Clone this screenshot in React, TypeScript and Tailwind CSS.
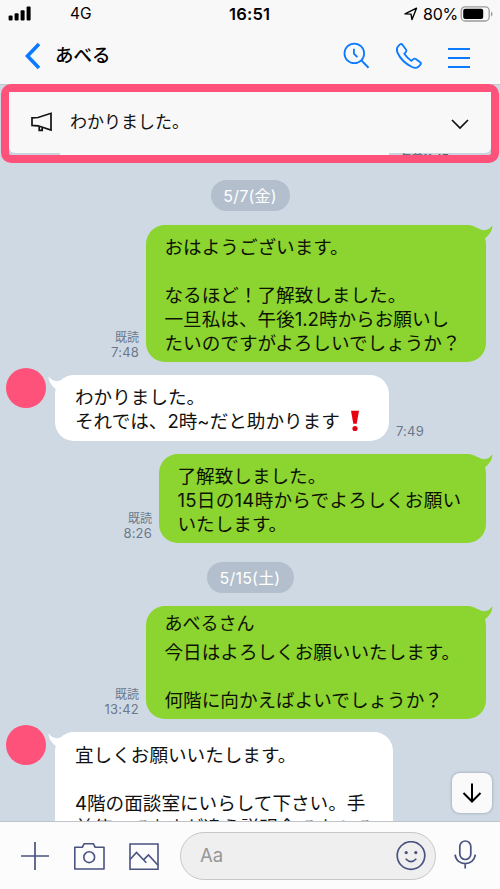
import type { ReactNode } from "react";

function Tail({ side }: { side: "left" | "right" }) {
  return (
    <svg
      viewBox="0 0 16 14"
      className={
        side === "right"
          ? "absolute -right-[7px] top-0 h-[14px] w-[16px] text-[#8cd42f]"
          : "absolute -left-[7px] top-px h-[14px] w-[16px] -scale-x-100 text-white"
      }
    >
      <path
        d="M0 2.8Q4 5.6 8.5 5.1Q12.5 4.4 15.6 0.6Q15 8.2 8.4 13L0 13Z"
        fill="currentColor"
      />
    </svg>
  );
}

function DatePill({ children, className }: { children: ReactNode; className: string }) {
  return (
    <div
      className={`mx-auto flex h-[31px] items-center justify-center rounded-full bg-[#b3bfcc] text-[16px] leading-none tracking-[0.2px] text-white ${className}`}
    >
      {children}
    </div>
  );
}

function Sent({
  time,
  className,
  children,
}: {
  time: string;
  className: string;
  children: ReactNode;
}) {
  return (
    <div className="flex items-end justify-end gap-[7px] pr-[14px]">
      <div className="pb-[2px] text-right text-[#6b7889]">
        <p className="text-[12px] leading-[14px]">既読</p>
        <p className="text-[13px] leading-[15.5px] tracking-[0.2px]">{time}</p>
      </div>
      <div
        className={`relative rounded-[19px] bg-[#8cd42f] pl-[18.5px] text-[18.6px] leading-[24px] whitespace-nowrap text-[#0c1204] ${className}`}
      >
        <Tail side="right" />
        {children}
      </div>
    </div>
  );
}

function Received({
  time,
  className,
  children,
}: {
  time?: string;
  className: string;
  children: ReactNode;
}) {
  return (
    <div className="flex items-start pl-[6px]">
      <div className="-mt-[7px] h-10 w-10 shrink-0 rounded-full bg-[#ff527b]" />
      <div
        className={`relative ml-[9px] shrink-0 rounded-[19px] bg-white pl-5 text-[18.6px] leading-[24px] whitespace-nowrap text-[#111] ${className}`}
      >
        <Tail side="left" />
        {children}
      </div>
      {time && (
        <p className="ml-[7px] self-end pb-[2px] text-[13px] leading-[15px] tracking-[0.2px] text-[#6b7889]">
          {time}
        </p>
      )}
    </div>
  );
}

function StatusBar() {
  return (
    <div className="flex h-7 items-center">
      <svg viewBox="0 0 24 16" className="ml-2 h-4 w-6 shrink-0" fill="#000">
        <rect x="0.6" y="9.5" width="4" height="5" rx="1" />
        <rect x="6.6" y="7.3" width="4" height="7.2" rx="1" />
        <rect x="12.6" y="4.2" width="4" height="10.3" rx="1" />
        <rect x="18.6" y="0.5" width="4" height="14" rx="1" />
      </svg>
      <span className="ml-[38px] w-[159px] text-[15.5px]">4G</span>
      <span className="w-[175px] text-[16.5px] font-semibold tracking-[0.2px]">16:51</span>
      <svg viewBox="0 0 14 14" className="h-[14px] w-[14px] shrink-0" fill="none">
        <path d="M1 6.9L12.5 1.2L8 12.5L7 7.1Z" stroke="#000" strokeWidth="1.4" strokeLinejoin="round" />
      </svg>
      <span className="ml-[5px] w-[37px] text-[16px] tracking-[-0.2px]">80%</span>
      <svg viewBox="0 0 33 16" className="h-4 w-[33px] shrink-0">
        <rect x="1.2" y="0.8" width="28" height="14.2" rx="4" fill="none" stroke="#9a9a9a" strokeWidth="1.3" />
        <rect x="3.2" y="2.8" width="20" height="10.2" rx="2" />
        <path d="M31 5.5V10.5Q32.5 9.7 32.5 8Q32.5 6.3 31 5.5Z" fill="#9a9a9a" />
      </svg>
    </div>
  );
}

function NavBar() {
  return (
    <div className="flex h-14 items-center">
      <svg viewBox="0 0 17 28" className="ml-6 h-7 w-[17px] shrink-0" fill="none">
        <path d="M15 2L3.5 14L15 26" stroke="#0a7aff" strokeWidth="3.6" />
      </svg>
      <h1 className="ml-[14px] grow text-[18.5px] font-medium">あべる</h1>
      <svg viewBox="0 0 28 28" className="h-7 w-7" fill="none" stroke="#0a7aff" strokeWidth="1.8">
        <circle cx="11.3" cy="11.4" r="9.8" />
        <path d="M18.4 18.4L25.5 25.7" strokeWidth="2" />
        <path d="M10.9 6.8V11.6L14.4 15.2" />
      </svg>
      <svg viewBox="0 0 28 28" className="ml-6 h-7 w-7" fill="none" stroke="#0a7aff" strokeWidth="1.8" strokeLinejoin="round">
        <path d="M2.8 4.7L5 2.4Q6.3 1.4 7.4 2.7L11 7.5Q12 9 10.8 10.2L9.3 11.7Q12.2 16 16.5 18.9L18.3 17.1Q19.5 16.2 20.8 17.1L25.2 20.3Q26.5 21.4 25.4 22.7L23.4 24.8Q21 26.8 17 25Q6.8 20 2.4 10.5Q1.1 6.8 2.8 4.7Z" />
      </svg>
      <svg viewBox="0 0 22 22" className="mt-[3px] mr-[30px] ml-[25px] h-[22px] w-[22px]" stroke="#0a7aff" strokeWidth="1.9">
        <path d="M0 2H22M0 11H22M0 20H22" />
      </svg>
    </div>
  );
}

function Announcement() {
  return (
    <div className="relative z-10 mx-px h-[79px] rounded-[10px] border-8 border-[#ff527b] bg-[#cad3de]">
      <div className="flex h-[61px] items-center rounded-b-[6px] bg-[#f8f8f8] px-[21px]">
        <svg viewBox="0 0 24 22" className="-mt-px h-[22px] w-6" fill="none" stroke="#111" strokeWidth="1.7">
          <path d="M2 6.9L8 6.5L21 2.3V19L8 14.8L2 14.4Z" />
          <path d="M9.2 15.2V19.3H12.2V16.2" />
        </svg>
        <p className="ml-[16px] grow text-[17px] text-[#111]">わかりました。</p>
        <svg viewBox="0 0 20 12" className="mt-[2px] h-3 w-5" fill="none" stroke="#111" strokeWidth="1.7">
          <path d="M2 2L10 10L18 2" />
        </svg>
      </div>
      <div className="flex h-[2px] overflow-hidden">
        <div className="ml-[51px] w-[329px] bg-[#f8f8f8]" />
        <p className="ml-[12px] text-[11px] leading-[11px] text-[#566]">午前11:47</p>
      </div>
    </div>
  );
}

function InputBar() {
  return (
    <div className="flex h-[68px] shrink-0 items-center border-t border-[#bfc4ca] bg-[#fcfcfc]">
      <svg viewBox="0 0 28 28" className="ml-[21px] h-7 w-7 shrink-0" stroke="#4a5280" strokeWidth="1.7">
        <path d="M0 14H28M14 0V28" />
      </svg>
      <svg viewBox="0 0 32 28" className="ml-6 h-7 w-8 shrink-0" fill="none" stroke="#4a5280" strokeWidth="1.6" strokeLinejoin="round">
        <path d="M1.8 5.3H9.3L11 1.8H20.5L22.2 5.3H31V27H1.8Z" />
        <circle cx="16.2" cy="15.2" r="5.4" />
      </svg>
      <svg viewBox="0 0 30 28" className="ml-6 h-7 w-[30px] shrink-0" fill="none" stroke="#4a5280" strokeWidth="1.6">
        <path d="M1 2H29V27.2H1Z" />
        <path d="M1 17.5L7.5 10.5L17.3 20.8M14.5 17.8L19.5 13L29 23.2" />
      </svg>
      <div className="ml-[21px] flex h-12 w-[256px] shrink-0 items-center rounded-full border border-[#c8c8c8] bg-[#efefef] pr-[9px] pl-[19px]">
        <span className="grow text-[18.5px] text-[#969696]">Aa</span>
        <svg viewBox="0 0 30 30" className="h-[30px] w-[30px]" fill="none" stroke="#4a5280" strokeWidth="1.7">
          <circle cx="15" cy="14.5" r="13.8" />
          <path d="M9.7 17.7Q15 23.5 20.3 17.7" />
          <circle cx="10.2" cy="11.6" r="1.6" fill="#4a5280" stroke="none" />
          <circle cx="19.8" cy="11.6" r="1.6" fill="#4a5280" stroke="none" />
        </svg>
      </div>
      <svg viewBox="0 0 22 30" className="-mt-[2px] ml-[18px] h-[30px] w-[22px] shrink-0" fill="none" stroke="#4a5280" strokeWidth="1.7">
        <rect x="5.8" y="1" width="11" height="18.5" rx="5.5" />
        <path d="M1.1 14.6C2.2 26.5 20.2 26.5 21.3 14.6M11.2 23.5V28.5" />
      </svg>
    </div>
  );
}

export default function App() {
  return (
    <div className="flex h-[889px] w-[500px] flex-col overflow-hidden bg-[#cfd9e4] font-[Inter,'Noto_Sans_CJK_JP',sans-serif] text-black">
      <header className="h-[85px] shrink-0 border-b border-[#c3c8ce] bg-[#f8f8f8]">
        <StatusBar />
        <NavBar />
      </header>

      <main className="relative -mt-px flex min-h-0 grow flex-col overflow-hidden">
        <Announcement />
        <div className="pt-[17px]">
          <DatePill className="w-[79px]">5/7(金)</DatePill>
        </div>
        <div className="mt-[14px]">
          <Sent time="7:48" className="h-[137px] w-[340px] pt-[10px]">
            <p>おはようございます。</p>
            <p>&nbsp;</p>
            <p>なるほど！了解致しました。</p>
            <p>一旦私は、午後1.2時からお願いし</p>
            <p>たいのですがよろしいでしょうか？</p>
          </Sent>
        </div>
        <div className="mt-[13px]">
          <Received time="7:49" className="h-[66px] w-[334px] pt-[10px]">
            <p>わかりました。</p>
            <p className="flex">
              それでは、2時~だと助かります
              <svg viewBox="0 0 10 22" className="mt-[1px] ml-[10px] h-[22px] w-[10px]" fill="#e60012">
                <path d="M1 0.8H9L6.7 13.8H3.3Z" />
                <circle cx="5" cy="18.5" r="2.6" />
              </svg>
            </p>
          </Received>
        </div>
        <div className="mt-[13px]">
          <Sent time="8:26" className="h-[89px] w-[327px] pt-[10px]">
            <p>了解致しました。</p>
            <p className="tracking-[0.25px]">15日の14時からでよろしくお願い</p>
            <p>いたします。</p>
          </Sent>
        </div>
        <div className="mt-[19px]">
          <DatePill className="w-[87px]">5/15(土)</DatePill>
        </div>
        <div className="mt-[13px]">
          <Sent time="13:42" className="h-[113px] w-[340px] pt-[6px]">
            <p className="h-7 text-[18px]">あべるさん</p>
            <p>今日はよろしくお願いいたします。</p>
            <p>&nbsp;</p>
            <p>何階に向かえばよいでしょうか？</p>
          </Sent>
        </div>
        <div className="mt-[13px]">
          <Received className="h-[160px] w-[338px] pt-[11px]">
            <p>宜しくお願いいたします。</p>
            <p>&nbsp;</p>
            <p>4階の面談室にいらして下さい。手</p>
            <p>前使ってますが違う説明会ですので</p>
          </Received>
        </div>

        <button className="absolute right-2 bottom-[8px] flex h-10 w-10 items-center justify-center rounded-lg bg-[#fafafa] shadow-[0_0_3px_rgba(60,70,90,0.45)]">
          <svg viewBox="0 0 20 20" className="h-5 w-5" fill="none" stroke="#000" strokeWidth="2">
            <path d="M10 0.5V18.5M1.5 10L10 18.5L18.5 10" />
          </svg>
        </button>
      </main>

      <InputBar />
    </div>
  );
}
